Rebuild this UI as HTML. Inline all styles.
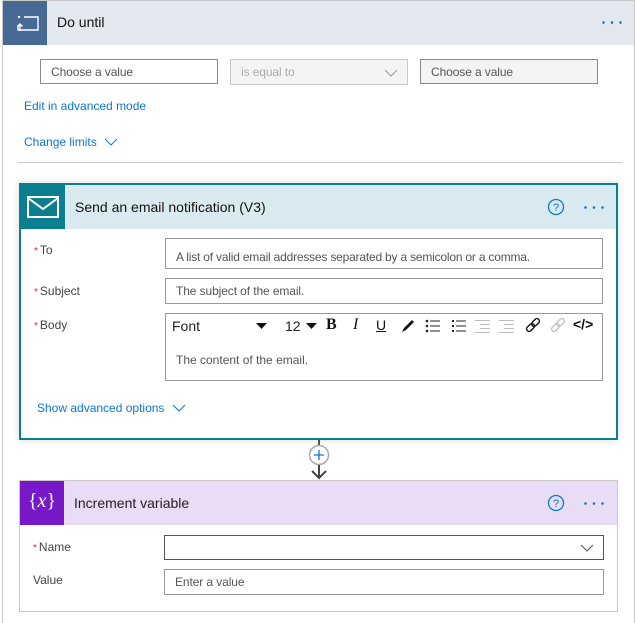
<!DOCTYPE html>
<html><head><style>
*{box-sizing:border-box;margin:0;padding:0}
body{width:636px;height:623px;background:#fff;font-family:"Segoe UI","Liberation Sans",sans-serif;font-size:12px;color:#333;position:relative;overflow:hidden}
.abs{position:absolute}
.outer{left:2px;top:0;width:633px;height:623px;border:1px solid #c8c8c8;border-bottom:none}
.inp{position:absolute;border:1px solid #8a8a8a;background:#fff;color:#555;font-size:12px;padding-left:10px;display:flex;align-items:center;letter-spacing:-0.1px}
.link{color:#0a78d4;font-size:12px}
.lbl{font-size:12px;color:#444}
.lbl b{color:#e0262f;font-weight:normal;font-size:10px;margin-right:2px}
</style></head><body>
<div class="abs outer"></div>
<div class="abs" style="left:3px;top:1px;width:631px;height:44px;background:#e3e7ee"></div>
<div class="abs" style="left:3px;top:1px;width:44px;height:44px;background:#476a94">
<svg width="44" height="44"><path d="M21 16h14v13H15v-5" fill="none" stroke="#fff" stroke-width="1.4"/><path d="M17 30v-7M14.5 25.5l2.5-2.5 2.5 2.5" stroke="#fff" stroke-width="1.4" fill="none"/><rect x="15" y="15" width="2" height="2" fill="#fff"/></svg></div>
<div class="abs" style="left:57px;top:14px;font-size:14px;color:#111">Do until</div>
<svg class="abs" style="left:601px;top:20px" width="24" height="5"><g fill="#0a78d4"><circle cx="2.5" cy="2.5" r="1.3"/><circle cx="11" cy="2.5" r="1.3"/><circle cx="19.5" cy="2.5" r="1.3"/></g></svg>
<div class="inp" style="left:40px;top:59px;width:178px;height:25px">Choose a value</div>
<div class="inp" style="left:230px;top:59px;width:178px;height:26px;background:#f4f4f4;border-color:#c8c8c8;color:#aaa">is equal to
<svg class="abs" style="left:153px;top:8px" width="14" height="10"><path d="M1 2l6 6 6-6" stroke="#999" fill="none"/></svg></div>
<div class="inp" style="left:420px;top:59px;width:178px;height:25px;background:#f4f4f4;color:#555">Choose a value</div>
<div class="abs link" style="left:24px;top:99px">Edit in advanced mode</div>
<div class="abs link" style="left:24px;top:135px">Change limits</div>
<svg class="abs" style="left:104px;top:138px" width="14" height="9"><path d="M1 1l6 6 6-6" stroke="#0a78d4" fill="none"/></svg>
<div class="abs" style="left:18px;top:162px;width:604px;height:1px;background:#c8c8c8"></div>
<div class="abs" style="left:19px;top:183px;width:599px;height:257px;border:2px solid #0b7f8f;box-shadow:0 0 8px rgba(0,0,0,.15)"></div>
<div class="abs" style="left:21px;top:185px;width:595px;height:44px;background:#d9ebf0"></div>
<div class="abs" style="left:21px;top:185px;width:44px;height:44px;background:#0b7f8f">
<svg width="44" height="44"><rect x="7" y="12" width="30" height="20" fill="none" stroke="#fff" stroke-width="2"/><path d="M7 13l15 11 15-11" stroke="#fff" stroke-width="2" fill="none"/></svg></div>
<div class="abs" style="left:75px;top:199px;font-size:14px;color:#111">Send an email notification (V3)</div>
<svg class="abs" style="left:547px;top:198px" width="18" height="18"><circle cx="9" cy="9" r="7.5" fill="none" stroke="#0a78d4" stroke-width="1.3"/><text x="9" y="13" text-anchor="middle" font-size="11" fill="#0a78d4" font-family="Liberation Sans">?</text></svg>
<svg class="abs" style="left:583px;top:205px" width="24" height="5"><g fill="#0a78d4"><circle cx="2.5" cy="2.5" r="1.3"/><circle cx="11" cy="2.5" r="1.3"/><circle cx="19.5" cy="2.5" r="1.3"/></g></svg>
<div class="abs lbl" style="left:34px;top:243px"><b>*</b>To</div>
<div class="abs lbl" style="left:34px;top:284px"><b>*</b>Subject</div>
<div class="abs lbl" style="left:34px;top:318px"><b>*</b>Body</div>
<div class="inp" style="left:165px;top:238px;width:438px;height:31px;align-items:flex-end;padding-bottom:4px;border-color:#999;letter-spacing:-0.2px">A list of valid email addresses separated by a semicolon or a comma.</div>
<div class="inp" style="left:165px;top:278px;width:438px;height:26px;border-color:#999">The subject of the email.</div>
<div class="abs" style="left:165px;top:313px;width:438px;height:68px;border:1px solid #999"></div>
<div class="abs" style="left:172px;top:318px;font-size:14px;color:#222">Font</div>
<svg class="abs" style="left:256px;top:323px" width="12" height="8"><path d="M0 0h11l-5.5 6z" fill="#111"/></svg>
<div class="abs" style="left:285px;top:318px;font-size:14px;color:#222">12</div>
<svg class="abs" style="left:306px;top:323px" width="12" height="8"><path d="M0 0h11l-5.5 6z" fill="#111"/></svg>
<div class="abs" style="left:326px;top:316px;font-size:16px;font-weight:bold;font-family:'Liberation Serif',serif;color:#111">B</div>
<div class="abs" style="left:353px;top:316px;font-size:16px;font-style:italic;font-family:'Liberation Serif',serif;color:#111">I</div>
<div class="abs" style="left:376px;top:317px;font-size:14px;text-decoration:underline;color:#111">U</div>
<svg class="abs" style="left:400px;top:318px" width="16" height="16"><path d="M2 14l2-4 8-8 2 2-8 8z" fill="#111"/></svg>
<svg class="abs" style="left:424px;top:318px" width="18" height="16"><g fill="#222"><circle cx="3" cy="3" r="1.3"/><circle cx="3" cy="8" r="1.3"/><circle cx="3" cy="13" r="1.3"/><rect x="6" y="2.5" width="10" height="1"/><rect x="6" y="7.5" width="10" height="1"/><rect x="6" y="12.5" width="10" height="1"/></g></svg>
<svg class="abs" style="left:451px;top:318px" width="18" height="16"><g fill="#222"><rect x="1" y="2" width="2" height="2"/><rect x="1" y="7" width="2" height="2"/><rect x="1" y="12" width="2" height="2"/><rect x="5" y="2.5" width="10" height="1"/><rect x="5" y="7.5" width="10" height="1"/><rect x="5" y="12.5" width="10" height="1"/></g></svg>
<svg class="abs" style="left:474px;top:318px" width="18" height="16"><g fill="#bbb"><rect x="1" y="2" width="15" height="1"/><rect x="6" y="6" width="10" height="1"/><rect x="6" y="10" width="10" height="1"/><rect x="1" y="14" width="15" height="1"/></g></svg>
<svg class="abs" style="left:498px;top:318px" width="18" height="16"><g fill="#bbb"><rect x="1" y="2" width="15" height="1"/><rect x="6" y="6" width="10" height="1"/><rect x="6" y="10" width="10" height="1"/><rect x="1" y="14" width="15" height="1"/></g></svg>
<svg class="abs" style="left:524px;top:317px" width="18" height="18"><g fill="none" stroke="#111" stroke-width="1.4"><rect x="2" y="8" width="9" height="5" rx="2.5" transform="rotate(-45 6.5 10.5)"/><rect x="7" y="3" width="9" height="5" rx="2.5" transform="rotate(-45 11.5 5.5)"/></g></svg>
<svg class="abs" style="left:549px;top:317px" width="18" height="18"><g fill="none" stroke="#bbb" stroke-width="1.2"><rect x="2" y="8" width="9" height="5" rx="2.5" transform="rotate(-45 6.5 10.5)"/><rect x="7" y="3" width="9" height="5" rx="2.5" transform="rotate(-45 11.5 5.5)"/></g></svg>
<div class="abs" style="left:573px;top:316px;font-size:14px;font-weight:bold;color:#111">&lt;/&gt;</div>
<div class="abs" style="left:176px;top:353px;font-size:12px;color:#555">The content of the email.</div>
<div class="abs link" style="left:37px;top:401px">Show advanced options</div>
<svg class="abs" style="left:172px;top:404px" width="14" height="9"><path d="M1 1l6 6 6-6" stroke="#0a78d4" fill="none"/></svg>
<div class="abs" style="left:318px;top:440px;width:2px;height:6px;background:#555"></div>
<svg class="abs" style="left:307px;top:444px" width="24" height="36"><circle cx="12" cy="11" r="9.5" fill="#fff" stroke="#aaa" stroke-width="1.5"/><path d="M12 6v10M7 11h10" stroke="#0a78d4" stroke-width="1.3"/><path d="M12 21v13M5 27l7 7 7-7" stroke="#444" stroke-width="2" fill="none"/></svg>
<div class="abs" style="left:19px;top:480px;width:599px;height:132px;border:1px solid #c8c8c8"></div>
<div class="abs" style="left:20px;top:481px;width:597px;height:44px;background:#e9dcf5"></div>
<div class="abs" style="left:20px;top:481px;width:44px;height:44px;background:#7718c9;color:#fff;font-family:'Liberation Serif',serif;font-size:20px;text-align:center;line-height:40px">{<i>x</i>}</div>
<div class="abs" style="left:74px;top:495px;font-size:14px;color:#222">Increment variable</div>
<svg class="abs" style="left:547px;top:494px" width="18" height="18"><circle cx="9" cy="9" r="7.5" fill="none" stroke="#0a78d4" stroke-width="1.3"/><text x="9" y="13" text-anchor="middle" font-size="11" fill="#0a78d4" font-family="Liberation Sans">?</text></svg>
<svg class="abs" style="left:583px;top:501px" width="24" height="5"><g fill="#0a78d4"><circle cx="2.5" cy="2.5" r="1.3"/><circle cx="11" cy="2.5" r="1.3"/><circle cx="19.5" cy="2.5" r="1.3"/></g></svg>
<div class="abs lbl" style="left:33px;top:540px"><b>*</b>Name</div>
<div class="abs lbl" style="left:33px;top:573px">Value</div>
<div class="inp" style="left:164px;top:535px;width:440px;height:25px;border-color:#555"></div>
<svg class="abs" style="left:580px;top:544px" width="14" height="9"><path d="M1 1l6 6 6-6" stroke="#555" fill="none"/></svg>
<div class="inp" style="left:164px;top:569px;width:440px;height:26px;border-color:#999">Enter a value</div>
</body></html>
